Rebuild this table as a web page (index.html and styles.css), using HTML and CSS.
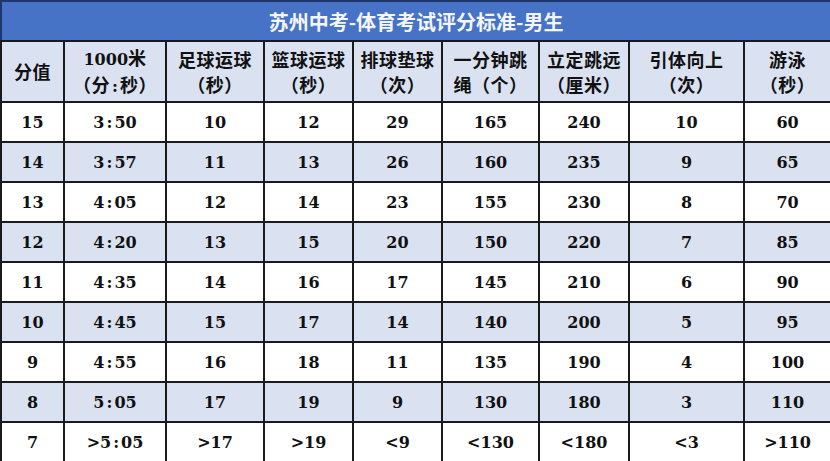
FILE: index.html
```html
<!DOCTYPE html>
<html lang="zh-CN">
<head>
<meta charset="utf-8">
<title>苏州中考-体育考试评分标准-男生</title>
<link rel="stylesheet" href="styles.css">
</head>
<body>
<table class="score-table">
  <colgroup>
    <col class="c1"><col class="c2"><col class="c3"><col class="c4"><col class="c5"><col class="c6"><col class="c7"><col class="c8"><col class="c9">
  </colgroup>
  <thead>
    <tr class="title-row"><th colspan="9">苏州中考-体育考试评分标准-男生</th></tr>
    <tr class="head-row">
      <th>分值</th>
      <th><span class="num">1000</span>米<br>（分<span class="num colon">:</span>秒）</th>
      <th>足球运球<br>（秒）</th>
      <th>篮球运球<br>（秒）</th>
      <th>排球垫球<br>（次）</th>
      <th>一分钟跳<br>绳（个）</th>
      <th>立定跳远<br>（厘米）</th>
      <th>引体向上<br>（次）</th>
      <th>游泳<br>（秒）</th>
    </tr>
  </thead>
  <tbody>
    <tr><td>15</td><td>3<span class="colon">:</span>50</td><td>10</td><td>12</td><td>29</td><td>165</td><td>240</td><td>10</td><td>60</td></tr>
    <tr class="alt"><td>14</td><td>3<span class="colon">:</span>57</td><td>11</td><td>13</td><td>26</td><td>160</td><td>235</td><td>9</td><td>65</td></tr>
    <tr><td>13</td><td>4<span class="colon">:</span>05</td><td>12</td><td>14</td><td>23</td><td>155</td><td>230</td><td>8</td><td>70</td></tr>
    <tr class="alt"><td>12</td><td>4<span class="colon">:</span>20</td><td>13</td><td>15</td><td>20</td><td>150</td><td>220</td><td>7</td><td>85</td></tr>
    <tr><td>11</td><td>4<span class="colon">:</span>35</td><td>14</td><td>16</td><td>17</td><td>145</td><td>210</td><td>6</td><td>90</td></tr>
    <tr class="alt"><td>10</td><td>4<span class="colon">:</span>45</td><td>15</td><td>17</td><td>14</td><td>140</td><td>200</td><td>5</td><td>95</td></tr>
    <tr><td>9</td><td>4<span class="colon">:</span>55</td><td>16</td><td>18</td><td>11</td><td>135</td><td>190</td><td>4</td><td>100</td></tr>
    <tr class="alt"><td>8</td><td>5<span class="colon">:</span>05</td><td>17</td><td>19</td><td>9</td><td>130</td><td>180</td><td>3</td><td>110</td></tr>
    <tr><td>7</td><td>&gt;5<span class="colon">:</span>05</td><td>&gt;17</td><td>&gt;19</td><td>&lt;9</td><td>&lt;130</td><td>&lt;180</td><td>&lt;3</td><td>&gt;110</td></tr>
  </tbody>
</table>
</body>
</html>
```
FILE: styles.css
```css
html, body {
  margin: 0;
  padding: 0;
  background: #ffffff;
}
body {
  width: 830px;
  height: 461px;
  overflow: hidden;
}
.score-table {
  width: 830px;
  border-collapse: collapse;
  table-layout: fixed;
  font-family: "DejaVu Serif", "Noto Sans CJK SC", serif;
  font-weight: bold;
  color: #111111;
}
.c1 { width: 63px; }
.c2 { width: 102px; }
.c3 { width: 98px; }
.c4 { width: 89px; }
.c5 { width: 89px; }
.c6 { width: 97px; }
.c7 { width: 90px; }
.c8 { width: 115px; }
.c9 { width: 87px; }

.title-row th {
  height: 38px;
  padding: 0;
  background: #4673c5;
  color: #f4f6fb;
  font-family: "Noto Sans CJK SC", serif;
  font-size: 20px;
  font-weight: bold;
  text-align: center;
  border: 2px solid #22366e;
  border-bottom: 2px solid #1a1a1a;
}
.head-row th {
  height: 59px;
  padding: 0;
  background: #dae2f2;
  font-family: "Noto Sans CJK SC", serif;
  font-size: 18px;
  line-height: 25px;
  font-weight: bold;
  text-align: center;
  vertical-align: middle;
  border: 2px solid #1a1a1a;
  letter-spacing: 0.5px;
}
.head-row .num {
  font-family: "DejaVu Serif", serif;
  font-size: 16px;
  letter-spacing: 0;
}
.colon {
  margin: 0 2px;
}
td {
  height: 38px;
  padding: 0;
  text-align: center;
  vertical-align: middle;
  font-size: 16px;
  border: 2px solid #1a1a1a;
  background: #ffffff;
}
tr.alt td {
  background: #dae2f2;
}
```
